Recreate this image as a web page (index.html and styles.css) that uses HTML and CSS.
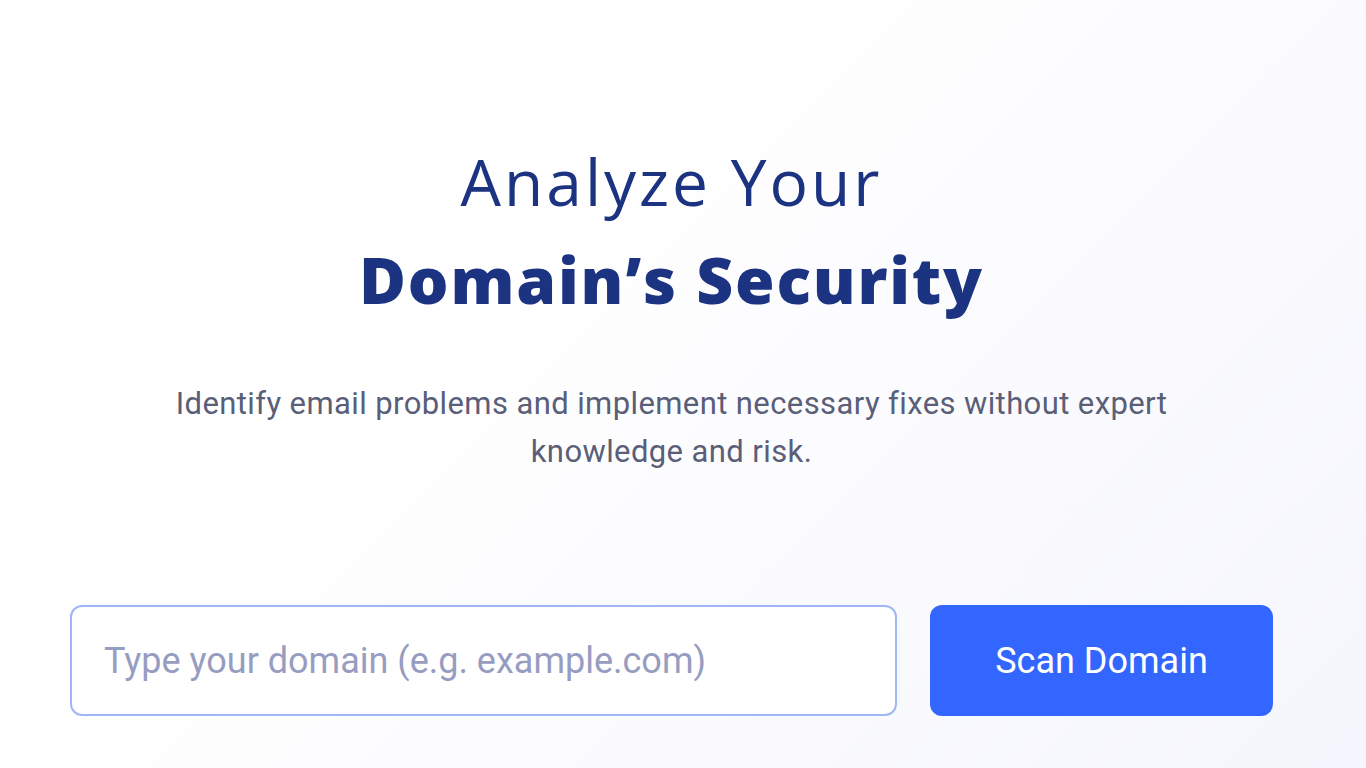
FILE: index.html
```html
<!DOCTYPE html>
<html lang="en">
<head>
  <meta charset="UTF-8">
  <meta name="viewport" content="width=device-width, initial-scale=1.0">
  <title>Domain Security Scan</title>
  <link rel="stylesheet" href="styles.css">
</head>
<body>
  <main class="hero">
    <h1 class="hero-title">
      <span class="title-light">Analyze Your</span>
      <span class="title-bold">Domain’s Security</span>
    </h1>
    <p class="hero-text">Identify email problems and implement necessary fixes without expert knowledge and risk.</p>
    <form class="scan-form" onsubmit="return false">
      <input type="text" class="scan-input" placeholder="Type your domain (e.g. example.com)">
      <button type="submit" class="scan-button">Scan Domain</button>
    </form>
  </main>
</body>
</html>
```

FILE: styles.css
```css
html, body {
  height: 100%;
}
body {
  margin: 0;
  font-family: Roboto, "Noto Sans", sans-serif;
  background: linear-gradient(135deg, #ffffff 35%, #f5f6fd 100%);
  overflow: hidden;
}
.hero {
  width: 1343px;
  padding-top: 133px;
  display: flex;
  flex-direction: column;
  align-items: center;
}
.hero-title {
  margin: 0;
  color: #1b3381;
  font-family: "Open Sans", sans-serif;
  font-size: 64px;
  line-height: 98px;
  text-align: center;
}
.hero-title span {
  display: block;
}
.title-light {
  font-weight: 400;
  letter-spacing: 3px;
}
.title-bold {
  font-weight: 800;
  letter-spacing: 1.8px;
}
.hero-text {
  margin: 51px 0 0;
  width: 1010px;
  color: #5a5e77;
  font-size: 31px;
  letter-spacing: 0.4px;
  line-height: 48px;
  text-align: center;
}
.scan-form {
  margin-top: 129px;
  display: flex;
  gap: 33px;
}
.scan-input {
  width: 827px;
  height: 111px;
  box-sizing: border-box;
  padding: 0 32px;
  border: 2px solid #a0b7f7;
  border-radius: 12px;
  background: #ffffff;
  font-family: Roboto, sans-serif;
  font-size: 36px;
  color: #333;
  outline: none;
}
.scan-input::placeholder {
  color: #979dc0;
}
.scan-button {
  width: 343px;
  height: 111px;
  border: none;
  border-radius: 12px;
  background: #3366ff;
  color: #ffffff;
  font-family: Roboto, sans-serif;
  font-size: 36px;
  cursor: pointer;
}
```
